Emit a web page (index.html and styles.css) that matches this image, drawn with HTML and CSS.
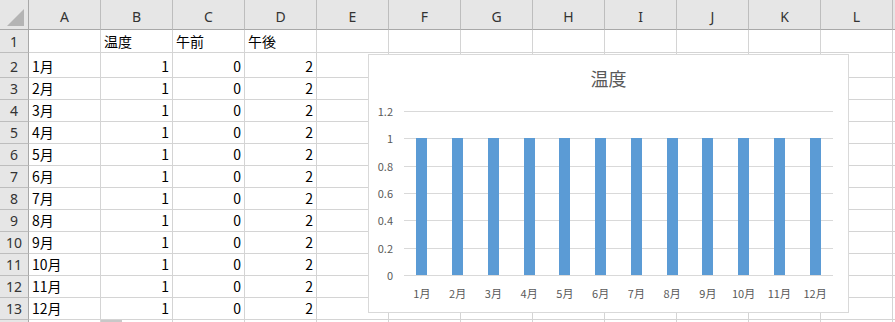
FILE: index.html
```html
<!DOCTYPE html>
<html lang="ja">
<head>
<meta charset="utf-8">
<title>Sheet</title>
<link rel="stylesheet" href="styles.css">
</head>
<body>
<div class="sheet">
  <div class="hd corner"><svg width="18" height="18" viewBox="0 0 18 18"><polygon points="17,0 17,17 0,17" fill="#b4b4b4"/></svg></div>
  <div class="hd col">A</div><div class="hd col">B</div><div class="hd col">C</div><div class="hd col">D</div><div class="hd col">E</div><div class="hd col">F</div><div class="hd col">G</div><div class="hd col">H</div><div class="hd col">I</div><div class="hd col">J</div><div class="hd col">K</div><div class="hd col">L</div><div class="hd col end"></div>

  <div class="hd row">1</div><div class="c"></div><div class="c">温度</div><div class="c">午前</div><div class="c">午後</div><div class="c"></div><div class="c"></div><div class="c"></div><div class="c"></div><div class="c"></div><div class="c"></div><div class="c"></div><div class="c"></div><div class="c end"></div>
  <div class="hd row">2</div><div class="c">1月</div><div class="c n">1</div><div class="c n">0</div><div class="c n">2</div><div class="c"></div><div class="c"></div><div class="c"></div><div class="c"></div><div class="c"></div><div class="c"></div><div class="c"></div><div class="c"></div><div class="c end"></div>
  <div class="hd row">3</div><div class="c">2月</div><div class="c n">1</div><div class="c n">0</div><div class="c n">2</div><div class="c"></div><div class="c"></div><div class="c"></div><div class="c"></div><div class="c"></div><div class="c"></div><div class="c"></div><div class="c"></div><div class="c end"></div>
  <div class="hd row">4</div><div class="c">3月</div><div class="c n">1</div><div class="c n">0</div><div class="c n">2</div><div class="c"></div><div class="c"></div><div class="c"></div><div class="c"></div><div class="c"></div><div class="c"></div><div class="c"></div><div class="c"></div><div class="c end"></div>
  <div class="hd row">5</div><div class="c">4月</div><div class="c n">1</div><div class="c n">0</div><div class="c n">2</div><div class="c"></div><div class="c"></div><div class="c"></div><div class="c"></div><div class="c"></div><div class="c"></div><div class="c"></div><div class="c"></div><div class="c end"></div>
  <div class="hd row">6</div><div class="c">5月</div><div class="c n">1</div><div class="c n">0</div><div class="c n">2</div><div class="c"></div><div class="c"></div><div class="c"></div><div class="c"></div><div class="c"></div><div class="c"></div><div class="c"></div><div class="c"></div><div class="c end"></div>
  <div class="hd row">7</div><div class="c">6月</div><div class="c n">1</div><div class="c n">0</div><div class="c n">2</div><div class="c"></div><div class="c"></div><div class="c"></div><div class="c"></div><div class="c"></div><div class="c"></div><div class="c"></div><div class="c"></div><div class="c end"></div>
  <div class="hd row">8</div><div class="c">7月</div><div class="c n">1</div><div class="c n">0</div><div class="c n">2</div><div class="c"></div><div class="c"></div><div class="c"></div><div class="c"></div><div class="c"></div><div class="c"></div><div class="c"></div><div class="c"></div><div class="c end"></div>
  <div class="hd row">9</div><div class="c">8月</div><div class="c n">1</div><div class="c n">0</div><div class="c n">2</div><div class="c"></div><div class="c"></div><div class="c"></div><div class="c"></div><div class="c"></div><div class="c"></div><div class="c"></div><div class="c"></div><div class="c end"></div>
  <div class="hd row">10</div><div class="c">9月</div><div class="c n">1</div><div class="c n">0</div><div class="c n">2</div><div class="c"></div><div class="c"></div><div class="c"></div><div class="c"></div><div class="c"></div><div class="c"></div><div class="c"></div><div class="c"></div><div class="c end"></div>
  <div class="hd row">11</div><div class="c">10月</div><div class="c n">1</div><div class="c n">0</div><div class="c n">2</div><div class="c"></div><div class="c"></div><div class="c"></div><div class="c"></div><div class="c"></div><div class="c"></div><div class="c"></div><div class="c"></div><div class="c end"></div>
  <div class="hd row">12</div><div class="c">11月</div><div class="c n">1</div><div class="c n">0</div><div class="c n">2</div><div class="c"></div><div class="c"></div><div class="c"></div><div class="c"></div><div class="c"></div><div class="c"></div><div class="c"></div><div class="c"></div><div class="c end"></div>
  <div class="hd row">13</div><div class="c">12月</div><div class="c n">1</div><div class="c n">0</div><div class="c n">2</div><div class="c"></div><div class="c"></div><div class="c"></div><div class="c"></div><div class="c"></div><div class="c"></div><div class="c"></div><div class="c"></div><div class="c end"></div>
  <div class="hd row"></div><div class="c"></div><div class="c"><span class="mark"></span></div><div class="c"></div><div class="c"></div><div class="c"></div><div class="c"></div><div class="c"></div><div class="c"></div><div class="c"></div><div class="c"></div><div class="c"></div><div class="c"></div><div class="c end"></div>

  <div class="chart">
    <div class="chart-title">温度</div>
    <div class="chart-body">
      <div class="y-axis">
        <span>1.2</span><span>1</span><span>0.8</span><span>0.6</span><span>0.4</span><span>0.2</span><span>0</span>
      </div>
      <div class="plot">
        <div class="gl"></div><div class="gl"></div><div class="gl"></div><div class="gl"></div><div class="gl"></div><div class="gl"></div><div class="gl"></div>
        <div class="bars">
          <div class="cat"><div class="bar" style="height:83.333%"></div></div>
          <div class="cat"><div class="bar" style="height:83.333%"></div></div>
          <div class="cat"><div class="bar" style="height:83.333%"></div></div>
          <div class="cat"><div class="bar" style="height:83.333%"></div></div>
          <div class="cat"><div class="bar" style="height:83.333%"></div></div>
          <div class="cat"><div class="bar" style="height:83.333%"></div></div>
          <div class="cat"><div class="bar" style="height:83.333%"></div></div>
          <div class="cat"><div class="bar" style="height:83.333%"></div></div>
          <div class="cat"><div class="bar" style="height:83.333%"></div></div>
          <div class="cat"><div class="bar" style="height:83.333%"></div></div>
          <div class="cat"><div class="bar" style="height:83.333%"></div></div>
          <div class="cat"><div class="bar" style="height:83.333%"></div></div>
        </div>
      </div>
      <div class="x-axis">
        <span>1月</span><span>2月</span><span>3月</span><span>4月</span><span>5月</span><span>6月</span><span>7月</span><span>8月</span><span>9月</span><span>10月</span><span>11月</span><span>12月</span>
      </div>
    </div>
  </div>
</div>
</body>
</html>
```
FILE: styles.css
```css
html, body {
  margin: 0;
  padding: 0;
  background: #fff;
}
body {
  width: 895px;
  height: 322px;
  overflow: hidden;
}
.sheet {
  position: relative;
  display: grid;
  grid-template-columns: 29px repeat(12, 72px) 1fr;
  grid-template-rows: 30px 23px 25px repeat(11, 22px) 1fr;
  width: 895px;
  height: 322px;
  font-family: "Noto Sans CJK JP", sans-serif;
  font-size: 14px;
  color: #000;
}
.c {
  box-sizing: border-box;
  border-right: 1px solid #d4d4d4;
  border-bottom: 1px solid #d4d4d4;
  display: flex;
  align-items: flex-end;
  padding: 0 3px 2px;
  line-height: 18px;
  white-space: nowrap;
  overflow: hidden;
}
.c.n {
  justify-content: flex-end;
}
.c.end {
  border-right: none;
}
.hd {
  box-sizing: border-box;
  background: #e6e6e6;
  color: #333;
  font-family: "Noto Sans", sans-serif;
  font-size: 14px;
  display: flex;
  justify-content: center;
}
.hd.col {
  border-right: 1px solid #bdbdbd;
  border-bottom: 1px solid #a8a8a8;
  align-items: flex-end;
  padding-bottom: 3px;
  line-height: 18px;
}
.hd.col.end {
  border-right: none;
}
.hd.row {
  border-right: 1px solid #a8a8a8;
  border-bottom: 1px solid #bdbdbd;
  align-items: flex-end;
  padding-bottom: 1px;
  line-height: 18px;
}
.hd.corner {
  border-right: 1px solid #a8a8a8;
  border-bottom: 1px solid #a8a8a8;
  align-items: flex-end;
  justify-content: flex-end;
  padding: 0 3px 2px 0;
}
.hd.corner svg {
  display: block;
}
.mark {
  display: block;
  width: 21px;
  height: 3px;
  background: #c8c8c8;
  align-self: flex-start;
  margin-left: -3px;
}

/* chart */
.chart {
  position: absolute;
  left: 368px;
  top: 54px;
  width: 481px;
  height: 259px;
  box-sizing: border-box;
  border: 1px solid #d9d9d9;
  background: #fff;
  font-family: "Noto Sans CJK JP", sans-serif;
  color: #595959;
}
.chart-title {
  margin-top: 11px;
  height: 24px;
  line-height: 24px;
  text-align: center;
  font-size: 18px;
}
.chart-body {
  display: grid;
  grid-template-columns: 35px 429px;
  grid-template-rows: 165px auto;
  margin-top: 21px;
}
.y-axis {
  display: flex;
  flex-direction: column;
  justify-content: space-between;
  height: 178px;
  margin-top: -7px;
  padding-right: 11px;
  text-align: right;
  font-size: 11px;
  line-height: 14px;
}
.plot {
  position: relative;
  height: 165px;
  display: flex;
  flex-direction: column;
  justify-content: space-between;
}
.gl {
  height: 1px;
  background: #d9d9d9;
}
.bars {
  position: absolute;
  left: 0;
  right: 0;
  top: 0;
  bottom: 1px;
  display: flex;
  align-items: flex-end;
}
.cat {
  flex: 1;
  height: 100%;
  display: flex;
  justify-content: center;
  align-items: flex-end;
}
.bar {
  width: 11px;
  background: #5b9bd5;
}
.x-axis {
  grid-column: 2;
  display: flex;
  margin-top: 10px;
  font-size: 11px;
  line-height: 14px;
}
.x-axis span {
  flex: 1;
  text-align: center;
}
```
